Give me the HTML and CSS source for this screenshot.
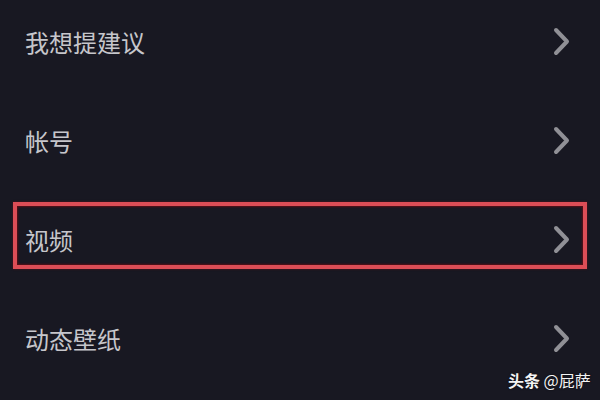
FILE: index.html
```html
<!DOCTYPE html>
<html lang="zh-CN">
<head>
  <meta charset="UTF-8">
  <title>设置</title>
  <link rel="stylesheet" href="styles.css">
</head>
<body>

<div class="list">
  <div class="row">
    <span class="label">我想提建议</span>
    <svg class="chev" width="17" height="29" viewBox="0 0 17 29"><path d="M3 3 L14 14.5 L3 26"/></svg>
  </div>
  <div class="row">
    <span class="label">帐号</span>
    <svg class="chev" width="17" height="29" viewBox="0 0 17 29"><path d="M3 3 L14 14.5 L3 26"/></svg>
  </div>
  <div class="row marked">
    <span class="label">视频</span>
    <svg class="chev" width="17" height="29" viewBox="0 0 17 29"><path d="M3 3 L14 14.5 L3 26"/></svg>
  </div>
  <div class="row">
    <span class="label">动态壁纸</span>
    <svg class="chev" width="17" height="29" viewBox="0 0 17 29"><path d="M3 3 L14 14.5 L3 26"/></svg>
  </div>
</div>

<div class="watermark"><b>头条</b> @屁萨</div>

</body>
</html>
```

FILE: styles.css
```css
html, body {
  height: 100%;
}

body {
  margin: 0;
  background: #181822;
  font-family: "Noto Sans CJK SC", "Noto Sans", sans-serif;
  overflow: hidden;
  position: relative;
}

.list {
  margin-top: -8px;
}

.row {
  height: 99px;
  display: flex;
  align-items: center;
  justify-content: space-between;
  padding: 0 30px 0 25px;
  position: relative;
}

.label {
  font-size: 24px;
  color: #c6c6cb;
}

.chev path {
  fill: none;
  stroke: #909096;
  stroke-width: 4;
  stroke-linecap: round;
  stroke-linejoin: round;
}

/* red annotation box round the video row */
.marked::after {
  content: "";
  position: absolute;
  top: 12px;
  left: 13px;
  right: 13px;
  height: 59px;
  border: 4px solid #dc4d56;
  box-shadow: inset 0 0 2px 1px #5a0f16, 0 0 2px #5a0f16;
}

.watermark {
  position: absolute;
  left: 508px;
  top: 368px;
  font-size: 16px;
  color: #f4f4f4;
  text-shadow: 0 0 2px rgba(0,0,0,0.6);
}

.watermark b {
  font-weight: bold;
}
```
